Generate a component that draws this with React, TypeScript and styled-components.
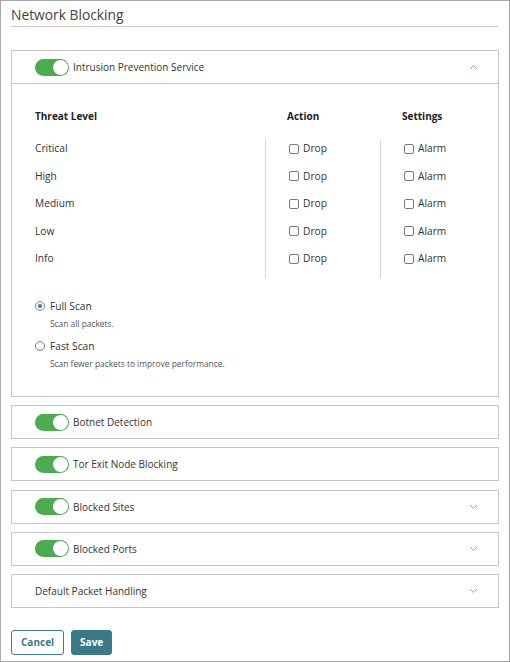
import React, { useState } from 'react';
import styled, { createGlobalStyle } from 'styled-components';

const GlobalStyle = createGlobalStyle`
	html, body {
		margin: 0;
		padding: 0;
		background: #ffffff;
	}
	body {
		font-family: 'Open Sans', 'Liberation Sans', sans-serif;
		color: #333333;
	}
`;

const Frame = styled.div`
	box-sizing: border-box;
	width: 510px;
	height: 662px;
	border: 1px solid #a8a8a8;
	padding: 0 10px;
	display: flex;
	flex-direction: column;
`;

const PageTitle = styled.h2`
	margin: 0;
	padding-top: 4px;
	height: 21px;
	line-height: 20px;
	font-size: 13.8px;
	font-weight: 400;
	color: #444444;
	border-bottom: 1px solid #c8c8c8;
	margin-right: 1px;
`;

const Sections = styled.div`
	margin-top: 23px;
	display: flex;
	flex-direction: column;
	gap: 8.2px;
`;

const Panel = styled.div`
	border: 1px solid #c6c6c6;
	background: #ffffff;
`;

const PanelHeader = styled.div<{ $open?: boolean }>`
	height: 32px;
	display: flex;
	align-items: center;
	padding: 0 20px 0 23px;
	border-bottom: ${p => (p.$open ? '1px solid #c6c6c6' : 'none')};
	font-size: 10px;
	color: #333333;
`;

const HeaderLabel = styled.span`
	flex: 1;
	margin-left: 4px;
`;

const PlainLabel = styled.span`
	flex: 1;
`;

const Switch = styled.span<{ $on: boolean }>`
	position: relative;
	width: 34px;
	height: 17px;
	border-radius: 9px;
	background: ${p => (p.$on ? '#4caa4f' : '#c4c4c4')};
	flex-shrink: 0;
	cursor: pointer;

	&::after {
		content: '';
		position: absolute;
		top: 1px;
		left: ${p => (p.$on ? '18px' : '1px')};
		width: 15px;
		height: 15px;
		border-radius: 50%;
		background: #ffffff;
	}
`;

const Chevron = styled.svg`
	width: 9px;
	height: 6px;
	flex-shrink: 0;
`;

const PanelBody = styled.div`
	padding: 23.5px 23px 26px 23px;
`;

const ThreatTable = styled.div`
	display: flex;
`;

const Column = styled.div<{ $width?: number }>`
	${p => (p.$width ? `width: ${p.$width}px; flex-shrink: 0;` : 'flex: 1;')}
	display: flex;
	flex-direction: column;
`;

const ColumnHead = styled.div<{ $inset?: boolean }>`
	font-size: 10px;
	font-weight: 700;
	line-height: 17px;
	color: #222222;
	padding-left: ${p => (p.$inset ? '22px' : '0')};
	margin-bottom: 15.5px;
`;

const ColumnList = styled.div<{ $divided?: boolean }>`
	border-left: ${p => (p.$divided ? '1px solid #d4d4d4' : 'none')};
	padding-left: ${p => (p.$divided ? '23px' : '0')};
`;

const Cell = styled.div`
	height: 27.5px;
	display: flex;
	align-items: flex-start;
	font-size: 10.2px;
	line-height: 17px;
	color: #333333;
`;

const Box = styled.span`
	box-sizing: border-box;
	width: 10px;
	height: 10px;
	margin-top: 3.5px;
	margin-right: 4px;
	border: 1px solid #7a7a7a;
	border-radius: 2px;
	background: #ffffff;
	flex-shrink: 0;
`;

const ScanOptions = styled.div`
	margin-top: 20px;
	display: flex;
	flex-direction: column;
`;

const RadioRow = styled.label`
	display: flex;
	align-items: center;
	height: 17px;
	font-size: 10.2px;
	color: #333333;
`;

const Radio = styled.span<{ $checked: boolean }>`
	box-sizing: border-box;
	width: 10px;
	height: 10px;
	border-radius: 50%;
	border: 1px solid ${p => (p.$checked ? '#6f86a3' : '#7a7a7a')};
	margin-right: 5px;
	display: flex;
	align-items: center;
	justify-content: center;

	&::after {
		content: '';
		width: 4px;
		height: 4px;
		border-radius: 50%;
		background: ${p => (p.$checked ? '#4f6f99' : 'transparent')};
	}
`;

const Hint = styled.div<{ $last?: boolean }>`
	font-size: 8.4px;
	line-height: 12px;
	color: #555555;
	padding-left: 15px;
	margin-top: 3.5px;
	margin-bottom: ${p => (p.$last ? '0' : '7.5px')};
`;

const Actions = styled.div`
	margin-top: 22px;
	display: flex;
	gap: 7px;
`;

const Button = styled.button<{ $primary?: boolean }>`
	box-sizing: border-box;
	height: 25px;
	padding: 0 ${p => (p.$primary ? '8px' : '9px')};
	border-radius: 3px;
	border: 1px solid #3b7d89;
	background: ${p => (p.$primary ? '#387b87' : '#ffffff')};
	color: ${p => (p.$primary ? '#ffffff' : '#3b7d89')};
	font-family: 'Open Sans', 'Liberation Sans', sans-serif;
	font-size: 10px;
	font-weight: 700;
	cursor: pointer;
`;

const levels = ['Critical', 'High', 'Medium', 'Low', 'Info'];

const ChevronIcon: React.FunctionComponent<{ up?: boolean }> = ({ up }) => (
	<Chevron viewBox="0 0 9 6">
		<polyline
			points={up ? '1,5 4.5,1.5 8,5' : '1,1 4.5,4.5 8,1'}
			fill="none"
			stroke="#7fa9b7"
			strokeWidth="1"
		/>
	</Chevron>
);

const App: React.FunctionComponent<{}> = () => {
	const [scan, setScan] = useState('full');

	const collapsed = [
		{ title: 'Botnet Detection', toggle: true, chevron: false },
		{ title: 'Tor Exit Node Blocking', toggle: true, chevron: false },
		{ title: 'Blocked Sites', toggle: true, chevron: true },
		{ title: 'Blocked Ports', toggle: true, chevron: true },
		{ title: 'Default Packet Handling', toggle: false, chevron: true }
	];

	return (
		<>
			<GlobalStyle />
			<Frame>
				<PageTitle>Network Blocking</PageTitle>
				<Sections>
					<Panel>
						<PanelHeader $open>
							<Switch $on />
							<HeaderLabel>Intrusion Prevention Service</HeaderLabel>
							<ChevronIcon up />
						</PanelHeader>
						<PanelBody>
							<ThreatTable>
								<Column $width={230}>
									<ColumnHead>Threat Level</ColumnHead>
									<ColumnList>
										{levels.map(level => (
											<Cell key={level}>{level}</Cell>
										))}
									</ColumnList>
								</Column>
								<Column $width={115}>
									<ColumnHead $inset>Action</ColumnHead>
									<ColumnList $divided>
										{levels.map(level => (
											<Cell key={level}>
												<Box />
												Drop
											</Cell>
										))}
									</ColumnList>
								</Column>
								<Column>
									<ColumnHead $inset>Settings</ColumnHead>
									<ColumnList $divided>
										{levels.map(level => (
											<Cell key={level}>
												<Box />
												Alarm
											</Cell>
										))}
									</ColumnList>
								</Column>
							</ThreatTable>
							<ScanOptions>
								<RadioRow onClick={() => setScan('full')}>
									<Radio $checked={scan === 'full'} />
									Full Scan
								</RadioRow>
								<Hint>Scan all packets.</Hint>
								<RadioRow onClick={() => setScan('fast')}>
									<Radio $checked={scan === 'fast'} />
									Fast Scan
								</RadioRow>
								<Hint $last>Scan fewer packets to improve performance.</Hint>
							</ScanOptions>
						</PanelBody>
					</Panel>
					{collapsed.map(section => (
						<Panel key={section.title}>
							<PanelHeader>
								{section.toggle && <Switch $on />}
								{section.toggle ? (
									<HeaderLabel>{section.title}</HeaderLabel>
								) : (
									<PlainLabel>{section.title}</PlainLabel>
								)}
								{section.chevron && <ChevronIcon />}
							</PanelHeader>
						</Panel>
					))}
				</Sections>
				<Actions>
					<Button>Cancel</Button>
					<Button $primary>Save</Button>
				</Actions>
			</Frame>
		</>
	);
};

export default App;
